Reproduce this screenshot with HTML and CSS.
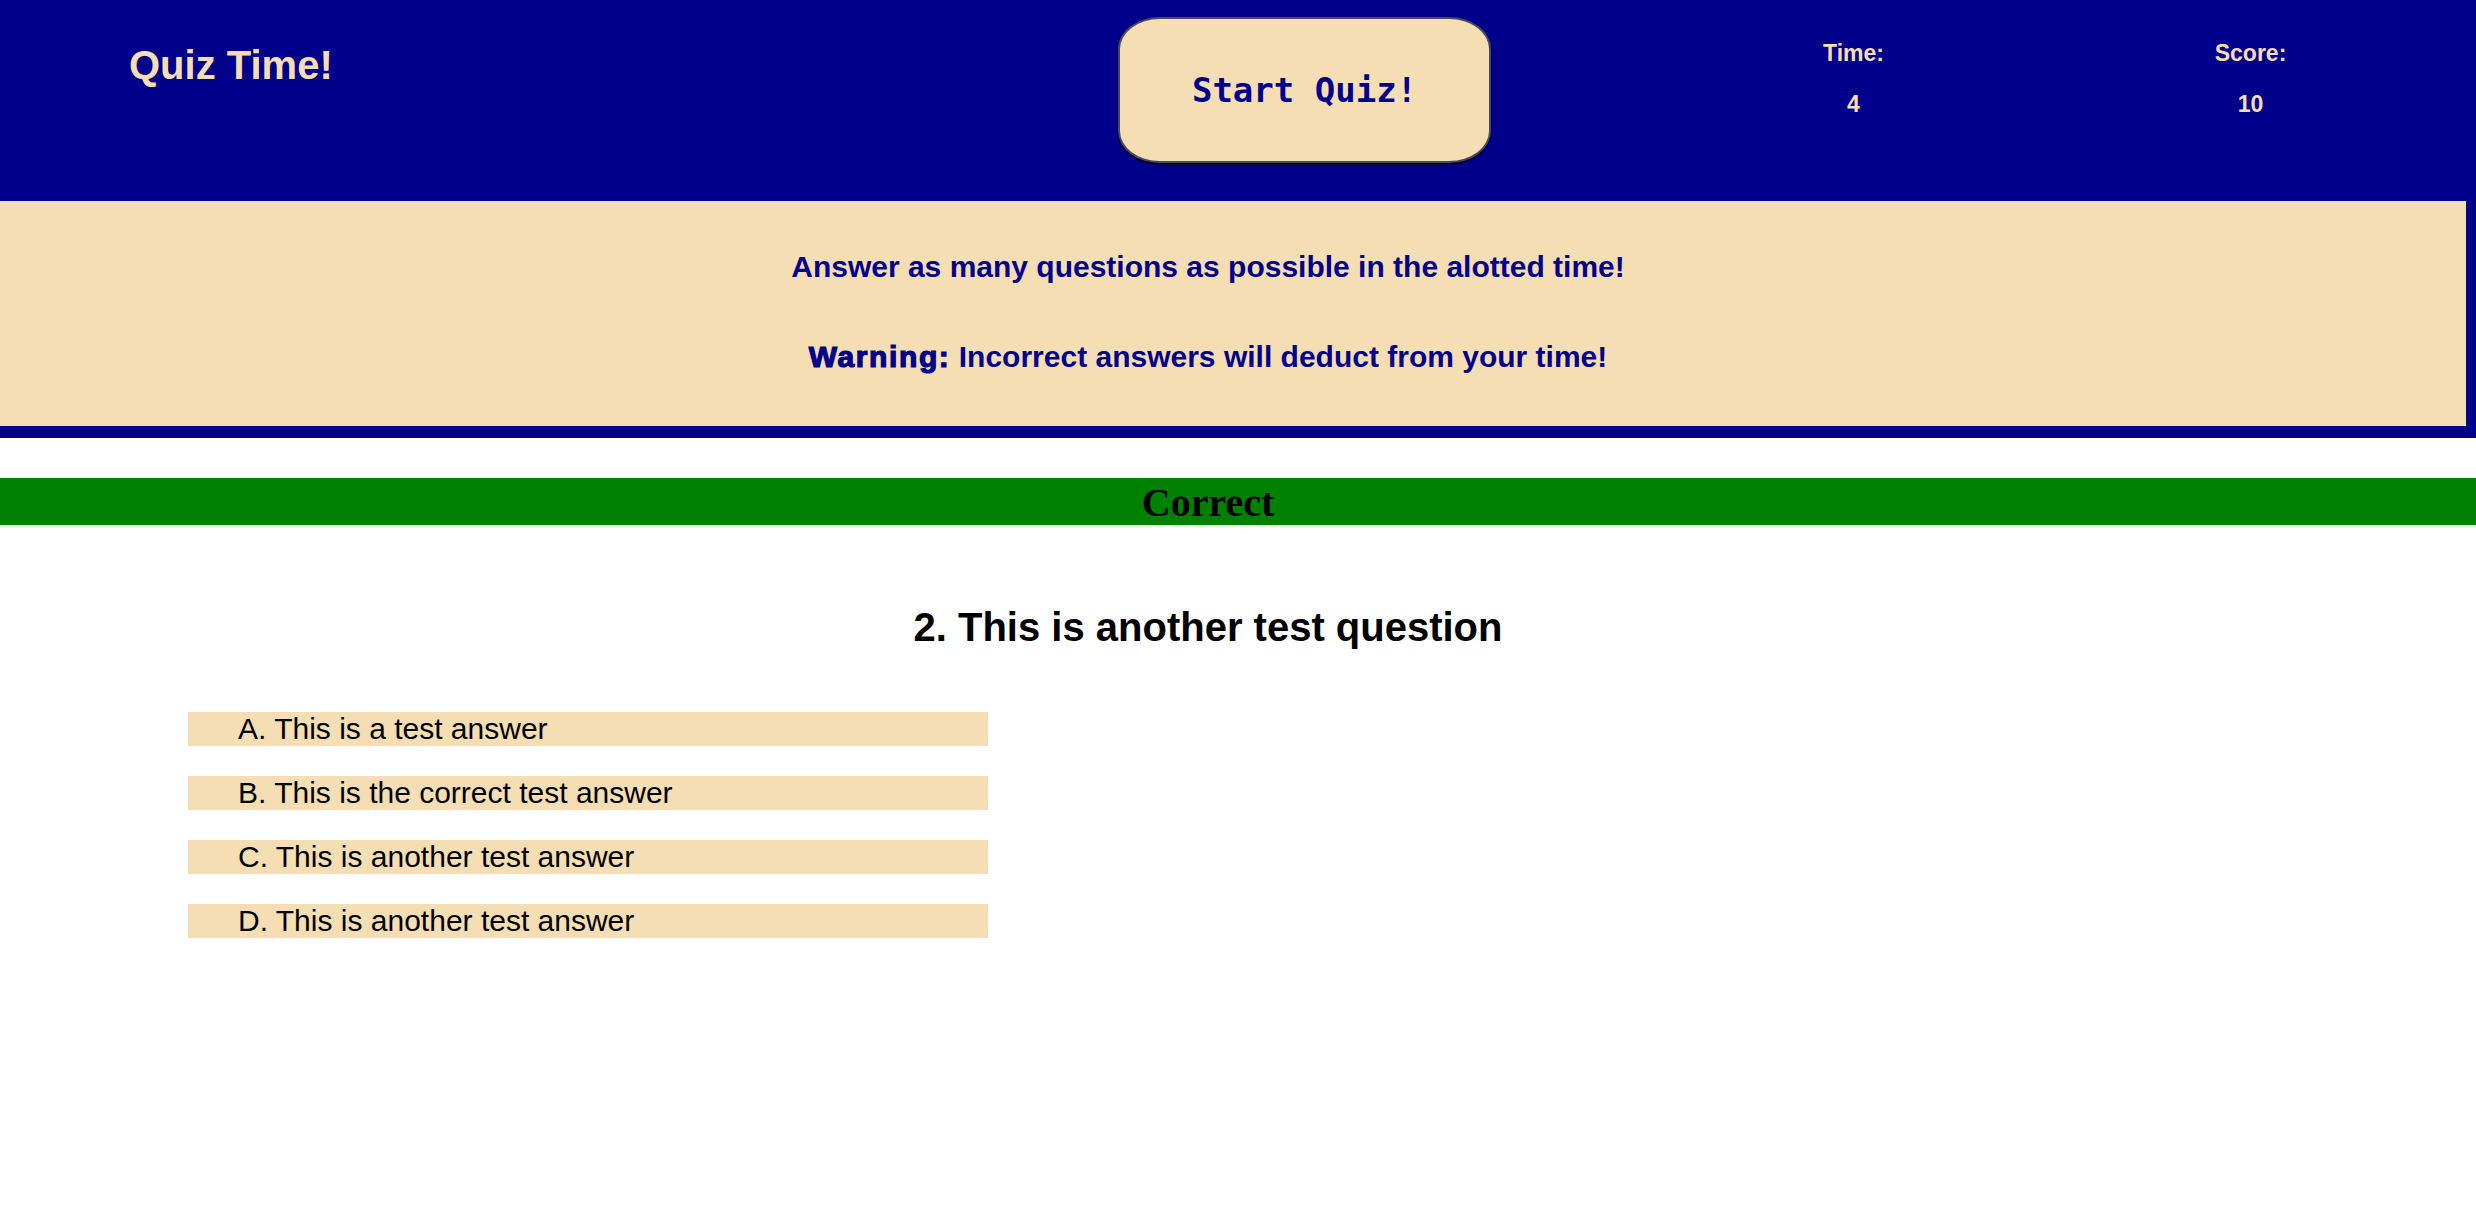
FILE: index.html
```html
<!DOCTYPE html>
<html lang="en">
<head>
<meta charset="utf-8">
<title>Quiz Time!</title>
<link rel="stylesheet" href="styles.css">
</head>
<body>
<header class="topbar">
  <h1 class="title">Quiz Time!</h1>
  <button class="start-btn">Start Quiz!</button>
  <div class="stats">
    <div class="stat">
      <div class="stat-label">Time:</div>
      <div class="stat-value">4</div>
    </div>
    <div class="stat">
      <div class="stat-label">Score:</div>
      <div class="stat-value">10</div>
    </div>
  </div>
</header>
<section class="info">
  <p class="info-line">Answer as many questions as possible in the alotted time!</p>
  <p class="info-line info-second"><span class="warn">Warning:</span> Incorrect answers will deduct from your time!</p>
</section>
<div class="feedback">Correct</div>
<main class="quiz">
  <h2 class="question">2. This is another test question</h2>
  <ul class="answers">
    <li class="answer">A. This is a test answer</li>
    <li class="answer">B. This is the correct test answer</li>
    <li class="answer">C. This is another test answer</li>
    <li class="answer">D. This is another test answer</li>
  </ul>
</main>
</body>
</html>
```
FILE: styles.css
```css
html, body {
  margin: 0;
  padding: 0;
  background: #ffffff;
}
body {
  font-family: "Liberation Sans", Arial, sans-serif;
  width: 2476px;
  height: 1212px;
  overflow: hidden;
}

.topbar {
  background: #00008b;
  height: 201px;
  box-sizing: border-box;
  padding-left: 129px;
  display: flex;
  align-items: flex-start;
}
.title {
  flex: 0 0 989px;
  margin: 42px 0 0 0;
  font-size: 40px;
  line-height: 46px;
  font-weight: bold;
  color: #f5deb3;
}
.start-btn {
  flex: 0 0 373px;
  height: 146px;
  margin-top: 17px;
  background: #f5deb3;
  border: 2px solid #4a4a5a;
  border-radius: 42px / 32px;
  box-shadow: 0 2px 2px rgba(0, 0, 0, 0.7);
  font-family: "DejaVu Sans Mono", "Liberation Mono", monospace;
  font-weight: bold;
  font-size: 34px;
  color: #00008b;
  padding: 0;
}
.stats {
  margin-left: 164px;
  display: grid;
  grid-template-columns: 397px 397px;
  margin-top: 40px;
}
.stat {
  text-align: center;
  color: #f5deb3;
  font-weight: bold;
  font-size: 23px;
  line-height: 27px;
}
.stat-value {
  margin-top: 24px;
}

.info {
  background: #f5deb3;
  border-right: 10px solid #00008b;
  border-bottom: 12px solid #00008b;
  padding: 49px 50px 52px 0;
  text-align: center;
  color: #00008b;
}
.info-line {
  margin: 0;
  font-size: 30px;
  line-height: 34px;
  font-weight: bold;
}
.info-second {
  margin-top: 56px;
}
.warn {
  font-weight: bold;
  letter-spacing: 1.6px;
  -webkit-text-stroke: 1.2px #00008b;
}

.feedback {
  margin-top: 40px;
  background: #008000;
  height: 47px;
  line-height: 49px;
  padding-right: 60px;
  text-align: center;
  font-family: "Liberation Serif", "Times New Roman", serif;
  font-weight: bold;
  font-size: 40px;
  color: #000000;
}

.quiz {
  padding-right: 60px;
}
.question {
  margin: 79px 0 0 0;
  text-align: center;
  font-size: 40px;
  line-height: 46px;
  font-weight: bold;
  color: #000000;
}
.answers {
  list-style: none;
  margin: 62px 0 0 188px;
  padding: 0;
  width: 800px;
  display: flex;
  flex-direction: column;
  gap: 30px;
}
.answer {
  background: #f5deb3;
  height: 34px;
  line-height: 34px;
  padding-left: 50px;
  font-size: 30px;
  color: #000000;
}
```
